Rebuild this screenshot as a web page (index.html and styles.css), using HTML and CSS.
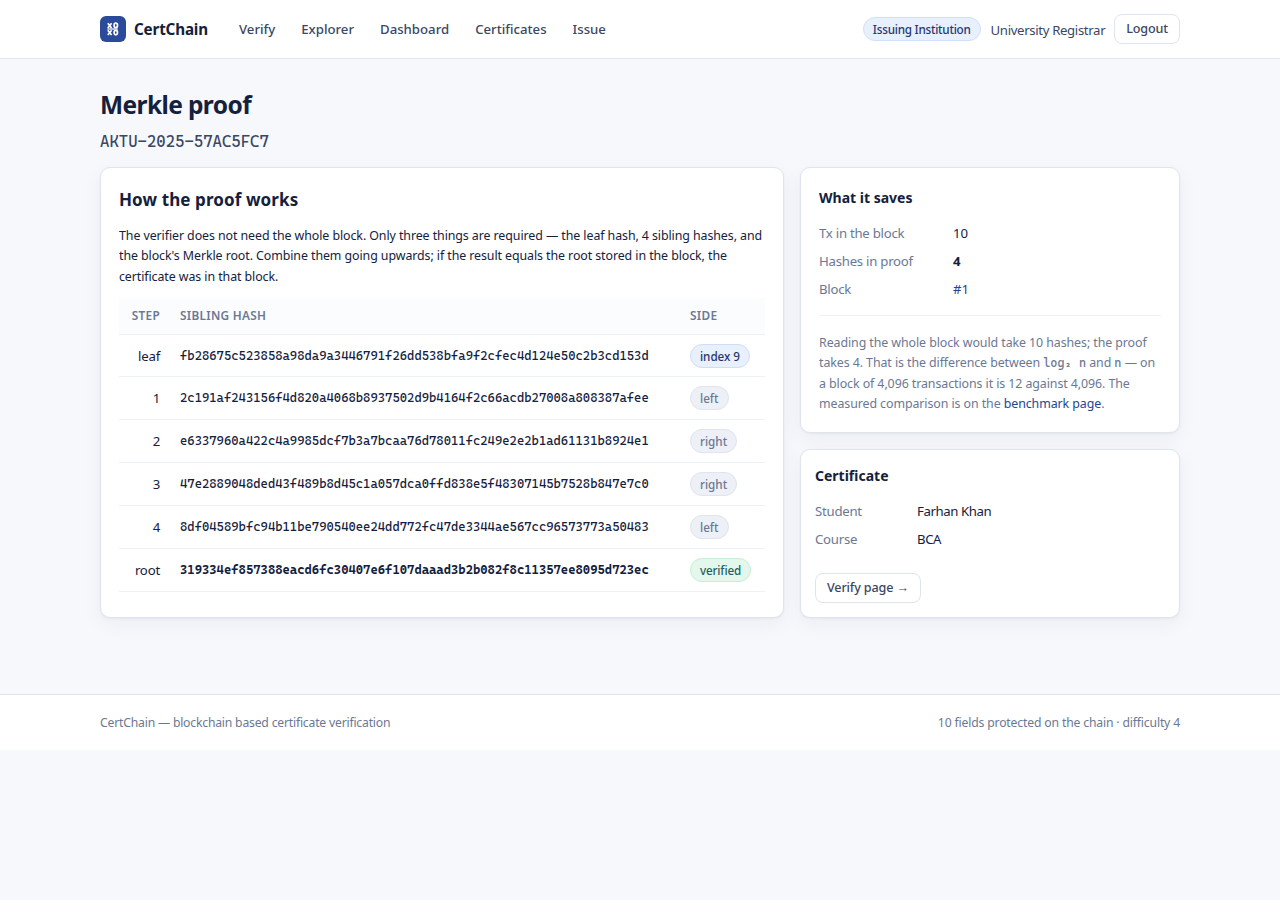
FILE: index.html
```html
<!DOCTYPE html>
<html lang="en">
<head>
<meta charset="utf-8">
<title>Merkle proof - CertChain</title>
<link rel="stylesheet" href="styles.css">
</head>
<body>
<header class="topbar">
	<div class="wrap topbar-in">
		<a class="brand" href="#">
			<svg class="logo" width="26" height="26" viewBox="0 0 26 26">
				<rect width="26" height="26" rx="6" fill="#2c4a9a"/>
				<g fill="none" stroke="#fff" stroke-width="1.7">
					<path d="M7.8 7.2l3.8 4.8M11.6 7.2l-3.8 4.8M7.8 14.2l3.8 4.8M11.6 14.2l-3.8 4.8"/>
					<ellipse cx="15.8" cy="9.4" rx="1.7" ry="2.2"/>
					<ellipse cx="15.8" cy="16.6" rx="1.7" ry="2.2"/>
					<path d="M7.4 13h10.4" stroke-opacity=".75"/>
				</g>
			</svg>
			<span class="brand-name">CertChain</span>
		</a>
		<nav class="nav">
			<a href="#">Verify</a>
			<a href="#">Explorer</a>
			<a href="#">Dashboard</a>
			<a href="#">Certificates</a>
			<a href="#">Issue</a>
		</nav>
		<div class="user">
			<span class="pill pill-role">Issuing Institution</span>
			<span class="user-name">University Registrar</span>
			<a class="btn" href="#">Logout</a>
		</div>
	</div>
</header>

<main class="wrap main">
	<h1>Merkle proof</h1>
	<p class="cert-id">AKTU-2025-57AC5FC7</p>
	<div class="grid">
		<section class="card works">
			<h2>How the proof works</h2>
			<p class="intro">The verifier does not need the whole block. Only three things are required — the leaf hash, 4 sibling hashes, and the block's Merkle root. Combine them going upwards; if the result equals the root stored in the block, the certificate was in that block.</p>
			<table class="proof">
				<thead>
					<tr><th class="step">Step</th><th>Sibling hash</th><th class="side">Side</th></tr>
				</thead>
				<tbody>
					<tr class="first"><td class="step">leaf</td><td class="hash">fb28675c523858a98da9a3446791f26dd538bfa9f2cfec4d124e50c2b3cd153d</td><td><span class="pill pill-info">index 9</span></td></tr>
					<tr><td class="step">1</td><td class="hash">2c191af243156f4d820a4068b8937502d9b4164f2c66acdb27008a808387afee</td><td><span class="pill">left</span></td></tr>
					<tr><td class="step">2</td><td class="hash">e6337960a422c4a9985dcf7b3a7bcaa76d78011fc249e2e2b1ad61131b8924e1</td><td><span class="pill">right</span></td></tr>
					<tr><td class="step">3</td><td class="hash">47e2889048ded43f489b8d45c1a057dca0ffd838e5f48307145b7528b847e7c0</td><td><span class="pill">right</span></td></tr>
					<tr><td class="step">4</td><td class="hash">8df04589bfc94b11be790540ee24dd772fc47de3344ae567cc96573773a50483</td><td><span class="pill">left</span></td></tr>
					<tr><td class="step">root</td><td class="hash"><b>319334ef857388eacd6fc30407e6f107daaad3b2b082f8c11357ee8095d723ec</b></td><td><span class="pill pill-ok">verified</span></td></tr>
				</tbody>
			</table>
		</section>

		<div class="side-col">
			<section class="card saves">
				<h3>What it saves</h3>
				<dl class="kv">
					<dt>Tx in the block</dt><dd>10</dd>
					<dt>Hashes in proof</dt><dd><b>4</b></dd>
					<dt>Block</dt><dd><a href="#">#1</a></dd>
				</dl>
				<p class="note">Reading the whole block would take 10 hashes; the proof takes 4. That is the difference between <code>log₂ n</code> and <code>n</code> — on a block of 4,096 transactions it is 12 against 4,096. The measured comparison is on the <a href="#">benchmark page</a>.</p>
			</section>
			<section class="card cert">
				<h3>Certificate</h3>
				<dl class="kv">
					<dt>Student</dt><dd>Farhan Khan</dd>
					<dt>Course</dt><dd>BCA</dd>
				</dl>
				<a class="btn" href="#">Verify page →</a>
			</section>
		</div>
	</div>
</main>

<footer class="footer">
	<div class="wrap footer-in">
		<span>CertChain — blockchain based certificate verification</span>
		<span class="footer-info">10 fields protected on the chain · difficulty 4</span>
	</div>
</footer>
</body>
</html>
```
FILE: styles.css
```css
* { box-sizing: border-box; }
body { margin: 0; background: #f7f8fc; color: #14213d; font: 13.2px/20px "Segoe UI", "Noto Sans", "Open Sans", sans-serif; }
h1, h2, h3, p, dl, dd { margin: 0; }
a { color: #24468f; text-decoration: none; }
.wrap { width: 1080px; margin: 0 auto; }

/* header */
.topbar { background: #fff; border-bottom: 1px solid #dfe4ee; }
.topbar-in { height: 58px; display: flex; align-items: center; }
.brand { display: flex; align-items: center; gap: 8px; color: #14213d; }
.logo { display: block; }
.brand-name { width: 74px; font-size: 15.2px; font-weight: 700; white-space: nowrap; letter-spacing: -.15px; }
.nav { display: flex; gap: 26px; margin-left: 31px; }
.nav a { color: #3a4763; font-size: 13.2px; font-weight: 500; letter-spacing: 0; }
.user { display: flex; align-items: center; margin-left: auto; color: #3a4763; }
.user-name { margin: 1px 9px 0 10px; letter-spacing: -.35px; }
.btn { display: inline-block; height: 30px; padding: 0 11px; border: 1px solid #dfe4ee; border-radius: 8px; background: #fff; color: #3a4763; font-size: 12.6px; line-height: 28px; font-weight: 500; white-space: nowrap; letter-spacing: -.15px; }

.pill { display: inline-block; height: 24px; padding: 0 9px; border: 1px solid #dfe4ee; border-radius: 12px; background: #edf0f6; color: #6b7893; font-size: 11.7px; line-height: 22px; font-weight: 500; white-space: nowrap; vertical-align: top; }
.pill-role { background: #e8f0fe; border-color: #cfe0fa; color: #24376f; letter-spacing: -.24px; }
.pill-info { background: #e8f0fc; border-color: #cfddf5; color: #24376f; letter-spacing: -.05px; }
.pill-ok { background: #e4f7ec; border-color: #c9ecd8; color: #27615f; letter-spacing: -.15px; }

/* content */
.main { padding: 30px 0 76px; }
h1 { font-size: 24.5px; line-height: 32px; font-weight: 700; letter-spacing: -.6px; }
.cert-id { margin: 9px 0 13px; color: #3a4763; font: 16px/24px "Cascadia Mono", "DejaVu Sans Mono", monospace; }
.grid { display: grid; grid-template-columns: 684px 380px; gap: 16px; height: 451px; }
.card { padding: 18px; background: #fff; border: 1px solid #dfe4ee; border-radius: 10px; box-shadow: 0 1px 2px rgba(20,33,61,.05), 0 6px 20px rgba(20,33,61,.05); }
.works { padding-top: 19px; }
h2 { font-size: 17px; line-height: 26px; font-weight: 700; letter-spacing: .1px; }
h3 { font-size: 14px; line-height: 22px; font-weight: 700; }
.intro { margin: 13px 0 11px; font-size: 12.4px; line-height: 20.4px; letter-spacing: -.08px; }

.proof { width: 646px; table-layout: fixed; border-collapse: separate; border-spacing: 0; }
.proof th { height: 37px; padding: 0 10px 2px; background: #fbfcfe; border-bottom: 1px solid #edf0f5; color: #6b7893; font-size: 11.8px; font-weight: 600; text-align: left; text-transform: uppercase; letter-spacing: .3px; }
.proof td { height: 43px; padding: 0 10px; border-bottom: 1px solid #edf0f5; }
.proof .first td { height: 42px; }
.proof .step { width: 51px; padding-right: 10px; text-align: right; }
.proof td.step { letter-spacing: -.2px; }
.proof .side { width: 85px; }
.proof .hash { font: 12.5px/20px "Cascadia Mono", "DejaVu Sans Mono", monospace; white-space: nowrap; }

.side-col { display: flex; flex-direction: column; gap: 16px; }
.saves { height: 266px; padding-top: 19px; }
.kv { display: grid; grid-template-columns: 134px 1fr; margin-top: 10px; line-height: 28px; }
.kv dt { color: #6b7893; letter-spacing: -.25px; }
.note { margin-top: 12px; padding-top: 17px; border-top: 1px solid #edf0f5; color: #6b7893; font-size: 12.4px; line-height: 20.4px; letter-spacing: -.08px; }
.note code { font: 12.2px/16px "Cascadia Mono", "DejaVu Sans Mono", monospace; letter-spacing: 0; }
.cert { height: 169px; padding: 15px 14px 14px; }
.cert .kv { grid-template-columns: 102px 1fr; margin: 10px 0 20px; }
.cert .kv dd { letter-spacing: -.4px; }

.footer { background: #fff; border-top: 1px solid #dfe4ee; }
.footer-in { height: 55px; display: flex; justify-content: space-between; align-items: center; color: #6b7893; font-size: 12.2px; letter-spacing: -.2px; }
.footer-info { letter-spacing: -.16px; }
```
